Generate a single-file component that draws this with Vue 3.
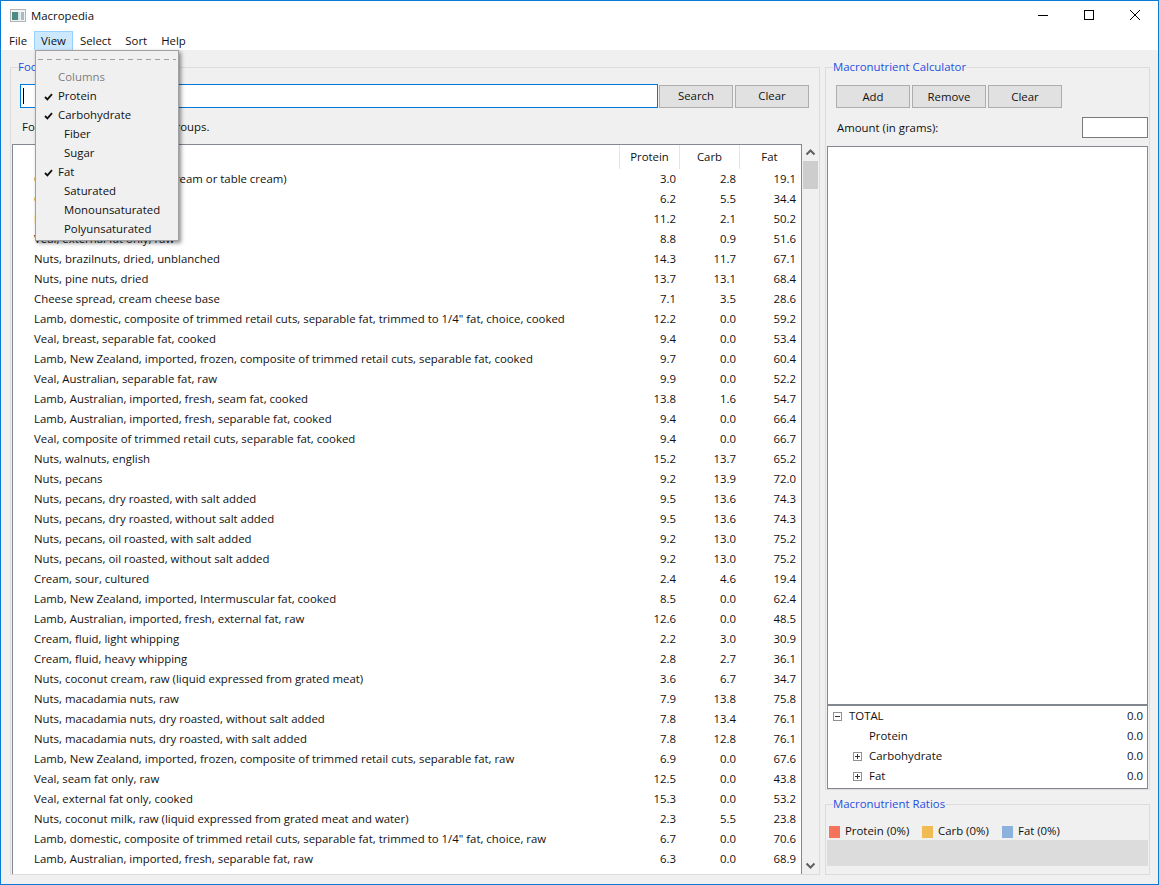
<template>
  <div class="window">
    <div class="titlebar">
      <svg class="app-icon" width="16" height="13" viewBox="0 0 16 13">
        <rect x="0.5" y="0.5" width="15" height="12" fill="#f2f2f2" stroke="#b4b4b4" />
        <rect x="2" y="3" width="6" height="8" fill="#4c8a88" />
        <rect x="8" y="3" width="2" height="8" fill="#d5e3e6" />
        <rect x="10" y="3" width="1" height="8" fill="#eef3f4" />
        <rect x="11" y="3" width="3" height="8" fill="#a9bcc6" />
      </svg>
      <span class="app-title">Macropedia</span>
      <div class="win-buttons">
        <svg width="46" height="30" viewBox="0 0 46 30"><path d="M18 14.5H28" stroke="#000" fill="none" /></svg>
        <svg width="46" height="30" viewBox="0 0 46 30"><rect x="18.5" y="9.5" width="9" height="9" stroke="#000" fill="none" /></svg>
        <svg width="46" height="30" viewBox="0 0 46 30"><path d="M18 9L28 19M28 9L18 19" stroke="#000" fill="none" /></svg>
      </div>
    </div>

    <div class="menubar">
      <span v-for="m in menus" :key="m" class="menu-item" :class="{ open: m === 'View' }">{{ m }}</span>
    </div>

    <div class="main">
      <div class="group food-group">
        <span class="group-title">Food Search</span>
        <div class="search-row">
          <div class="search-input"><span class="caret"></span></div>
          <button class="btn search-btn">Search</button>
          <button class="btn search-btn">Clear</button>
        </div>
        <div class="status">Found 200 foods in all food groups.</div>
        <div class="table-wrap">
          <div class="table">
            <div class="thead">
              <div class="cell-name"></div>
              <div class="th">Protein</div>
              <div class="th">Carb</div>
              <div class="th">Fat</div>
            </div>
            <div v-for="(f, i) in foods" :key="i" class="row">
              <div class="cell-name">{{ f[0] }}</div>
              <div class="num">{{ f[1] }}</div>
              <div class="num">{{ f[2] }}</div>
              <div class="num">{{ f[3] }}</div>
            </div>
          </div>
          <div class="scrollbar">
            <svg width="15" height="17" viewBox="0 0 15 17"><path d="M3.5 10.5L7.5 6.5L11.5 10.5" stroke="#606060" stroke-width="2" fill="none" /></svg>
            <div class="thumb"></div>
            <div class="track"></div>
            <svg width="15" height="17" viewBox="0 0 15 17"><path d="M3.5 6.5L7.5 10.5L11.5 6.5" stroke="#606060" stroke-width="2" fill="none" /></svg>
          </div>
        </div>
      </div>

      <div class="side">
        <div class="group calc-group">
          <span class="group-title">Macronutrient Calculator</span>
          <div class="calc-buttons">
            <button class="btn calc-btn">Add</button>
            <button class="btn calc-btn">Remove</button>
            <button class="btn calc-btn">Clear</button>
          </div>
          <div class="amount-row">
            <span class="amount-label">Amount (in grams):</span>
            <div class="amount-input"></div>
          </div>
          <div class="calc-list"></div>
          <div class="totals">
            <div v-for="t in totals" :key="t.name" class="total-row">
              <span class="expander-slot" :class="t.level">
                <svg v-if="t.box" width="9" height="9" viewBox="0 0 9 9">
                  <rect x="0.5" y="0.5" width="8" height="8" fill="#fff" stroke="#919191" />
                  <path :d="t.box === 'plus' ? 'M2 4.5H7M4.5 2V7' : 'M2 4.5H7'" stroke="#333" fill="none" />
                </svg>
              </span>
              <span class="total-name">{{ t.name }}</span>
              <span>0.0</span>
            </div>
          </div>
        </div>

        <div class="group ratio-group">
          <span class="group-title">Macronutrient Ratios</span>
          <div class="legend">
            <span v-for="l in legend" :key="l.name" class="legend-item" :style="{ width: l.w + 'px' }">
              <i class="swatch" :style="{ background: l.color }"></i>{{ l.name }}
            </span>
          </div>
          <div class="ratio-bar"></div>
        </div>
      </div>
    </div>

    <div class="dropdown">
      <div class="tearoff"></div>
      <div v-for="c in columns" :key="c.name" class="drop-item" :class="{ disabled: c.disabled, indent: c.indent }">
        <svg v-if="c.checked" class="check" width="9" height="8" viewBox="0 0 9 8">
          <path d="M1 4L3.4 6.4L8 1.2" stroke="#111" stroke-width="1.8" fill="none" />
        </svg>
        {{ c.name }}
      </div>
    </div>
  </div>
</template>

<script setup>
const menus = ['File', 'View', 'Select', 'Sort', 'Help']

const columns = [
  { name: 'Columns', disabled: true },
  { name: 'Protein', checked: true },
  { name: 'Carbohydrate', checked: true },
  { name: 'Fiber', indent: true },
  { name: 'Sugar', indent: true },
  { name: 'Fat', checked: true },
  { name: 'Saturated', indent: true },
  { name: 'Monounsaturated', indent: true },
  { name: 'Polyunsaturated', indent: true }
]

const totals = [
  { name: 'TOTAL', level: 'top', box: 'minus' },
  { name: 'Protein', level: 'sub' },
  { name: 'Carbohydrate', level: 'sub', box: 'plus' },
  { name: 'Fat', level: 'sub', box: 'plus' }
]

const legend = [
  { name: 'Protein (0%)', color: '#f4735a', w: 93 },
  { name: 'Carb (0%)', color: '#efbb52', w: 80 },
  { name: 'Fat (0%)', color: '#8ab2dc', w: 80 }
]

const foods = [
  ['Cream, fluid, light (coffee cream or table cream)', '3.0', '2.8', '19.1'],
  ['Cheese, cream', '6.2', '5.5', '34.4'],
  ['Lamb, external fat', '11.2', '2.1', '50.2'],
  ['Veal, external fat only, raw', '8.8', '0.9', '51.6'],
  ['Nuts, brazilnuts, dried, unblanched', '14.3', '11.7', '67.1'],
  ['Nuts, pine nuts, dried', '13.7', '13.1', '68.4'],
  ['Cheese spread, cream cheese base', '7.1', '3.5', '28.6'],
  ['Lamb, domestic, composite of trimmed retail cuts, separable fat, trimmed to 1/4" fat, choice, cooked', '12.2', '0.0', '59.2'],
  ['Veal, breast, separable fat, cooked', '9.4', '0.0', '53.4'],
  ['Lamb, New Zealand, imported, frozen, composite of trimmed retail cuts, separable fat, cooked', '9.7', '0.0', '60.4'],
  ['Veal, Australian, separable fat, raw', '9.9', '0.0', '52.2'],
  ['Lamb, Australian, imported, fresh, seam fat, cooked', '13.8', '1.6', '54.7'],
  ['Lamb, Australian, imported, fresh, separable fat, cooked', '9.4', '0.0', '66.4'],
  ['Veal, composite of trimmed retail cuts, separable fat, cooked', '9.4', '0.0', '66.7'],
  ['Nuts, walnuts, english', '15.2', '13.7', '65.2'],
  ['Nuts, pecans', '9.2', '13.9', '72.0'],
  ['Nuts, pecans, dry roasted, with salt added', '9.5', '13.6', '74.3'],
  ['Nuts, pecans, dry roasted, without salt added', '9.5', '13.6', '74.3'],
  ['Nuts, pecans, oil roasted, with salt added', '9.2', '13.0', '75.2'],
  ['Nuts, pecans, oil roasted, without salt added', '9.2', '13.0', '75.2'],
  ['Cream, sour, cultured', '2.4', '4.6', '19.4'],
  ['Lamb, New Zealand, imported, Intermuscular fat, cooked', '8.5', '0.0', '62.4'],
  ['Lamb, Australian, imported, fresh, external fat, raw', '12.6', '0.0', '48.5'],
  ['Cream, fluid, light whipping', '2.2', '3.0', '30.9'],
  ['Cream, fluid, heavy whipping', '2.8', '2.7', '36.1'],
  ['Nuts, coconut cream, raw (liquid expressed from grated meat)', '3.6', '6.7', '34.7'],
  ['Nuts, macadamia nuts, raw', '7.9', '13.8', '75.8'],
  ['Nuts, macadamia nuts, dry roasted, without salt added', '7.8', '13.4', '76.1'],
  ['Nuts, macadamia nuts, dry roasted, with salt added', '7.8', '12.8', '76.1'],
  ['Lamb, New Zealand, imported, frozen, composite of trimmed retail cuts, separable fat, raw', '6.9', '0.0', '67.6'],
  ['Veal, seam fat only, raw', '12.5', '0.0', '43.8'],
  ['Veal, external fat only, cooked', '15.3', '0.0', '53.2'],
  ['Nuts, coconut milk, raw (liquid expressed from grated meat and water)', '2.3', '5.5', '23.8'],
  ['Lamb, domestic, composite of trimmed retail cuts, separable fat, trimmed to 1/4" fat, choice, raw', '6.7', '0.0', '70.6'],
  ['Lamb, Australian, imported, fresh, separable fat, raw', '6.3', '0.0', '68.9']
]
</script>

<style scoped>
.window {
  position: relative;
  width: 1159px;
  height: 885px;
  box-sizing: border-box;
  border: 1px solid #0a7bd4;
  display: flex;
  flex-direction: column;
  background: #fff;
  color: #111;
  font-family: "Open Sans", "Liberation Sans", sans-serif;
  font-size: 11.4px;
  overflow: hidden;
}

.titlebar {
  height: 30px;
  flex: none;
  display: flex;
  align-items: center;
  padding-left: 9px;
}

.app-icon {
  margin: 0 5px 2px 0;
}

.app-title {
  margin-bottom: 2px;
}

.win-buttons {
  margin-left: auto;
  display: flex;
}

.win-buttons svg {
  display: block;
}

.menubar {
  height: 19px;
  flex: none;
  display: flex;
  padding-left: 1px;
}

.menu-item {
  padding: 0 6px;
  line-height: 18px;
  border: 1px solid transparent;
  border-width: 1px 1px 0;
}

.menu-item.open {
  background: #cce8ff;
  border-color: #99d1ff;
}

.main {
  flex: 1;
  min-height: 0;
  display: flex;
  gap: 5px;
  padding: 17px 8px 9px 9px;
  background: #f0f0f0;
}

.group {
  position: relative;
  border: 1px solid #dcdcdc;
  box-sizing: border-box;
}

.group-title {
  position: absolute;
  left: 7px;
  top: -8px;
  line-height: 14px;
  background: #f0f0f0;
  color: #1f4fe0;
}

.food-group {
  width: 810px;
  flex: none;
  display: flex;
  flex-direction: column;
}

.search-row {
  display: flex;
  align-items: center;
  margin: 16px 0 0 9px;
  height: 24px;
}

.search-input {
  width: 638px;
  height: 24px;
  box-sizing: border-box;
  border: 1px solid #0078d7;
  background: #fff;
  display: flex;
  align-items: center;
  padding-left: 2px;
}

.caret {
  width: 1px;
  height: 16px;
  background: #000;
}

.btn {
  height: 23px;
  box-sizing: border-box;
  border: 1px solid #adadad;
  background: #e1e1e1;
  color: #111;
  font: inherit;
  padding: 0 0 1px;
}

.search-btn {
  width: 74px;
  margin-left: 2px;
}

.search-btn:first-of-type {
  margin-left: 1px;
}

.status {
  height: 36px;
  line-height: 37px;
  padding-left: 11px;
}

.table-wrap {
  flex: 1;
  min-height: 0;
  display: flex;
  margin-left: 1px;
}

.table {
  width: 790px;
  box-sizing: border-box;
  border: 1px solid #828790;
  border-bottom: 0;
  background: #fff;
  overflow: hidden;
}

.thead {
  display: flex;
  height: 24px;
}

.th {
  width: 60px;
  box-sizing: border-box;
  border-left: 1px solid #e5e5e5;
  text-align: center;
  line-height: 23px;
}

.row {
  display: flex;
  height: 20px;
  line-height: 19px;
}

.cell-name {
  width: 606px;
  flex: none;
  padding-left: 21px;
  box-sizing: border-box;
  white-space: nowrap;
}

.num {
  width: 60px;
  box-sizing: border-box;
  text-align: right;
  padding-right: 3px;
}

.scrollbar {
  width: 15px;
  margin-left: 1px;
  display: flex;
  flex-direction: column;
}

.scrollbar svg {
  display: block;
  flex: none;
}

.thumb {
  height: 28px;
  background: #cdcdcd;
  flex: none;
}

.track {
  flex: 1;
}

.side {
  width: 325px;
  flex: none;
  display: flex;
  flex-direction: column;
  gap: 14px;
}

.calc-group {
  flex: 1;
  min-height: 0;
  display: flex;
  flex-direction: column;
}

.calc-buttons {
  display: flex;
  gap: 2px;
  margin: 17px 0 0 10px;
}

.calc-btn {
  width: 74px;
}

.amount-row {
  display: flex;
  justify-content: space-between;
  align-items: center;
  height: 21px;
  margin: 9px 1px 8px 11px;
}

.amount-label {
  margin-bottom: 1px;
}

.amount-input {
  width: 66px;
  height: 21px;
  box-sizing: border-box;
  border: 1px solid #7a7a7a;
  background: #fff;
}

.calc-list {
  flex: 1;
  margin: 0 1px;
  border: 1px solid #828790;
  border-bottom: 2px solid #828790;
  background: #fff;
}

.totals {
  margin: 0 1px;
  border: 1px solid #828790;
  border-top: 0;
  background: #fff;
  padding-bottom: 2px;
}

.total-row {
  display: flex;
  height: 20px;
  line-height: 19px;
  padding-right: 4px;
}

.expander-slot {
  flex: none;
  display: flex;
  align-items: center;
}

.expander-slot.top {
  width: 21px;
  padding-left: 5px;
  box-sizing: border-box;
}

.expander-slot.sub {
  width: 41px;
  padding-left: 25px;
  box-sizing: border-box;
}

.total-name {
  flex: 1;
}

.ratio-group {
  height: 71px;
  flex: none;
}

.legend {
  display: flex;
  margin: 18px 0 0 3px;
  height: 17px;
}

.legend-item {
  display: flex;
  align-items: flex-start;
  line-height: 16px;
  white-space: nowrap;
}

.swatch {
  width: 11px;
  height: 12px;
  margin: 3px 5px 0 0;
}

.ratio-bar {
  height: 26px;
  margin: 0 1px;
  background: #dcdcdc;
}

.dropdown {
  position: absolute;
  left: 34px;
  top: 49px;
  width: 144px;
  height: 191px;
  box-sizing: border-box;
  border: 1px solid #a0a0a0;
  background: #f0f0f0;
  box-shadow: 2px 2px 4px rgba(0, 0, 0, 0.45);
  padding-top: 8px;
}

.tearoff {
  height: 1px;
  margin: 0 2px 8px;
  background: repeating-linear-gradient(90deg, #a0a0a0 0 5px, transparent 5px 9px);
}

.drop-item {
  position: relative;
  height: 19px;
  line-height: 18px;
  padding-left: 22px;
  white-space: nowrap;
}

.drop-item.indent {
  padding-left: 28px;
}

.drop-item.disabled {
  color: #7d7d7d;
}

.check {
  position: absolute;
  left: 8px;
  top: 6px;
}
</style>

<style>
html, body {
  margin: 0;
  background: #fff;
}
</style>
